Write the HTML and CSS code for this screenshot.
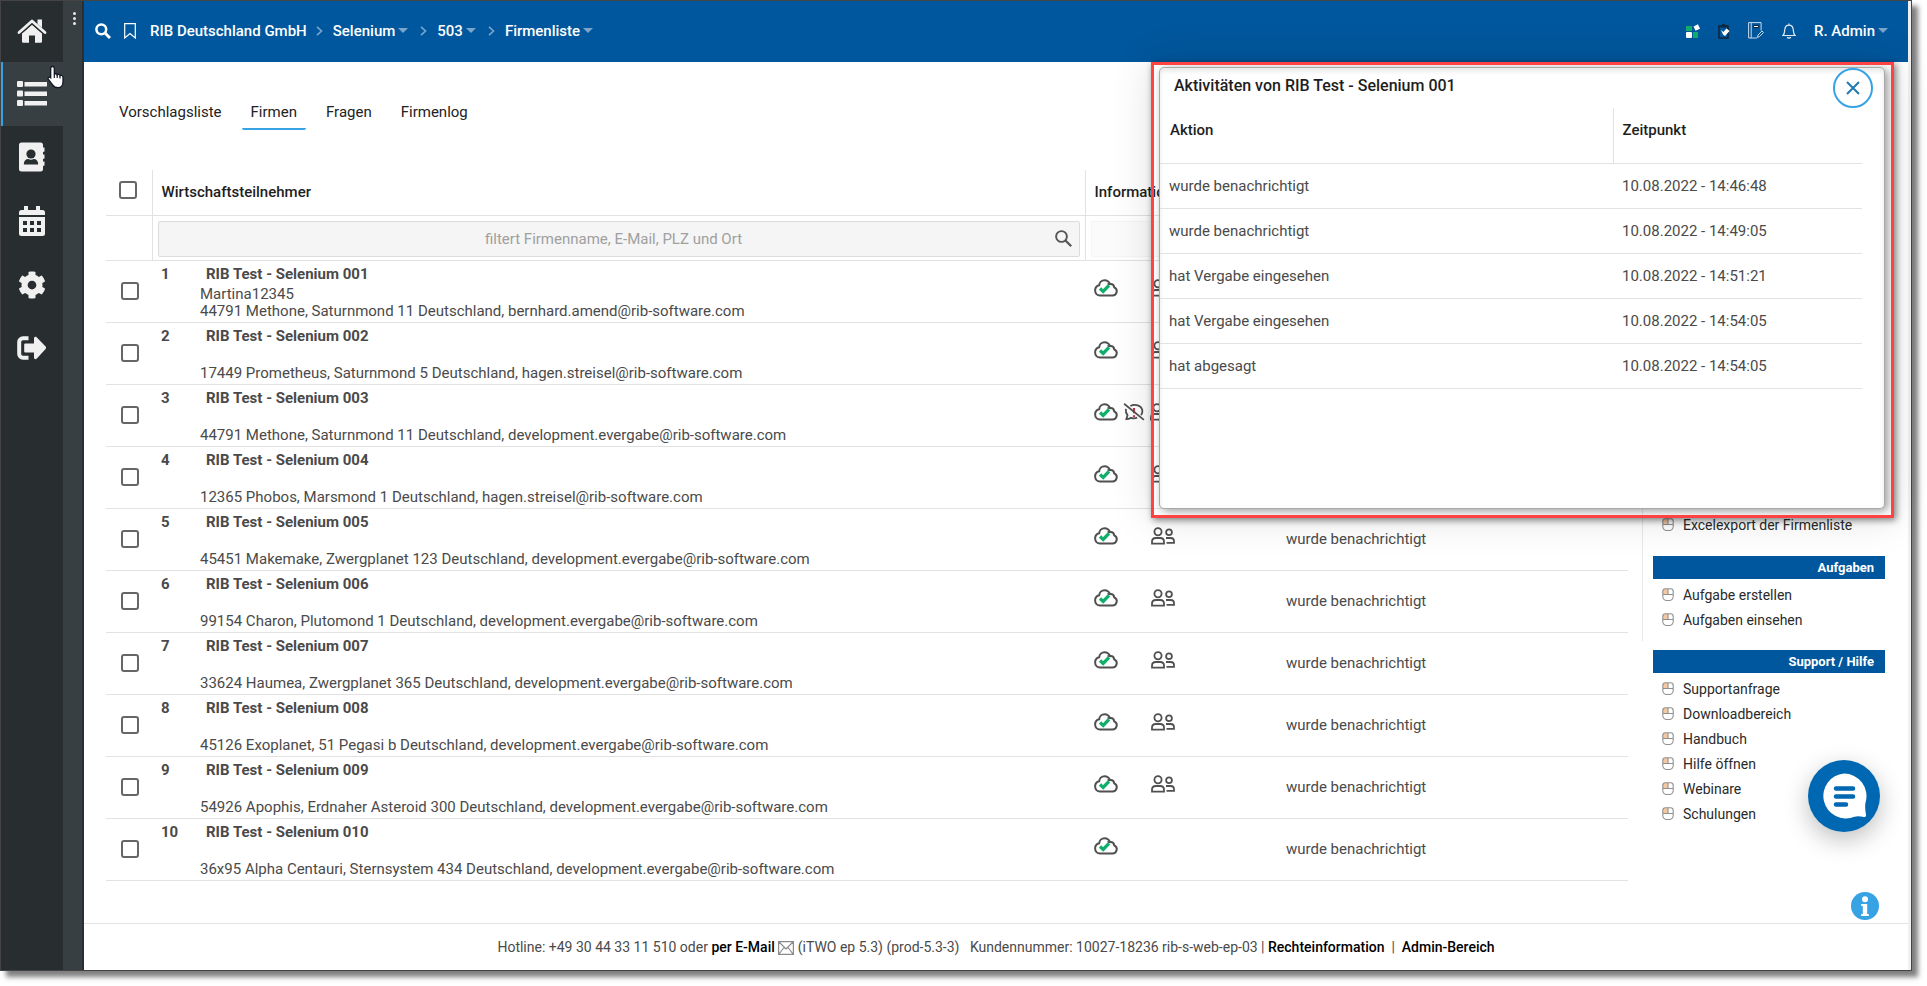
FILE: index.html
```html
<!DOCTYPE html>
<html lang="de">
<head>
<meta charset="utf-8">
<title>Firmenliste</title>
<link rel="stylesheet" href="styles.css">
</head>
<body>
<svg class="sprite" aria-hidden="true">
  <symbol id="cloud" viewBox="0 0 24 18">
    <path d="M6 16.500h12.200a4.300 4.300 0 0 0 2-8.200c-.3-2-2-3.400-4.200-3.200C15 2.600 12.800 1.200 10.600 1.200 7.600 1.200 5.400 3.400 5.200 6.200 2.800 6.800 1.100 8.800 1.100 11.300c0 3 2.200 5.200 4.900 5.200z" fill="none" stroke="#505050" stroke-width="2"/>
    <path d="M13.500 5.300c1-.5 2.400-.4 3.200.2" fill="none" stroke="#505050" stroke-width="1.700"/>
    <path d="M6 9.500l3.200 3L15 6.300" fill="none" stroke="#0fae6b" stroke-width="3.300"/>
  </symbol>
  <symbol id="people" viewBox="0 0 24 18">
    <g fill="none" stroke="#505050" stroke-width="1.800">
      <circle cx="7" cy="4.800" r="3.600"/>
      <path d="M1 16.700v-2c0-2.400 1.600-3.700 3.800-3.700h4.400c2.200 0 3.800 1.300 3.800 3.700v2z"/>
      <circle cx="18" cy="5.300" r="2.900"/>
      <path d="M15 11h4.500c2.200 0 3.500 1.200 3.500 3.200v1.600h-7.500"/>
    </g>
  </symbol>
  <symbol id="muted" viewBox="0 0 24 20">
    <path d="M3 6.500C2.500 10 3.500 12 4.800 13.500L3.500 18c2 0 3.500-.5 5-1.500 2.500.8 5 .6 7-.3M8 3.300C13 .5 20.500 2.500 21.300 8.500c.2 1.800-.3 3.500-1.500 5" fill="none" stroke="#505050" stroke-width="2"/>
    <path d="M12 5.500v6M12 13.500v2" stroke="#c0344a" stroke-width="2.400"/>
    <path d="M1 .8l22 18" stroke="#505050" stroke-width="1.900"/>
  </symbol>
  <symbol id="mouse" viewBox="0 0 12 14">
    <path d="M.8 6.500V3.500A2.700 2.700 0 0 1 3.500.8H6v5.700z" fill="#f7c9a0"/>
    <path d="M3.500.8h5a2.700 2.700 0 0 1 2.700 2.700v5a4 4 0 0 1-4 4H4.800a4 4 0 0 1-4-4v-5A2.700 2.700 0 0 1 3.500.8zM.8 6.500h10.400M6 .8v5.700" fill="none" stroke="#909090" stroke-width="1.100"/>
  </symbol>
</svg>

<div class="frame">
  <nav class="rail" aria-label="Hauptnavigation">
    <a class="rail-home" href="#" aria-label="Start">
      <svg width="30" height="26" viewBox="0 0 30 26"><path d="M2 14.500L15 3l13 11.500" fill="none" stroke="#f0f0f0" stroke-width="2.800" stroke-linejoin="round" stroke-linecap="round"/><path d="M20.500 1.500H25v8.500l-4.500-4z" fill="#f0f0f0"/><path d="M5 15.500L15 6.800l10 8.700V23.500a1.300 1.300 0 0 1-1.300 1.300H18v-7.300h-6v7.300H6.300A1.300 1.300 0 0 1 5 23.500z" fill="#f0f0f0"/><path d="M4 15.800L15 6.200l11 9.600" fill="none" stroke="#282d30" stroke-width="1"/></svg>
    </a>
    <div class="rail-items">
      <a class="rail-item active" href="#" aria-label="Listen">
        <svg width="30" height="26" viewBox="0 0 30 26" fill="#f0f0f0"><rect x="0" y="0" width="6" height="6" rx="1"/><rect x="7.500" y="1" width="22.500" height="4.500"/><rect x="0" y="9.500" width="6" height="6" rx="1"/><rect x="7.500" y="10.500" width="22.500" height="4.500"/><rect x="0" y="19" width="6" height="6" rx="1"/><rect x="7.500" y="20" width="22.500" height="4.500"/></svg>
      </a>
      <a class="rail-item" href="#" aria-label="Adressbuch">
        <svg width="28" height="30" viewBox="0 0 28 30"><path d="M3.500.5h19A2.500 2.500 0 0 1 25 3v2.500h1.500v4L25 10v2.500h1.500v4L25 17v2.500h1.500v4L25 24v3a2.500 2.500 0 0 1-2.500 2.500h-19A2.500 2.500 0 0 1 1 27V3A2.500 2.500 0 0 1 3.500.5z" fill="#f0f0f0"/><circle cx="13" cy="12" r="4.600" fill="#282d30"/><path d="M5.800 22.500c0-3.600 1.800-5.500 4.500-5.500 1.600 1 3.800 1 5.400 0 2.700 0 4.500 1.900 4.500 5.500z" fill="#282d30"/></svg>
      </a>
      <a class="rail-item" href="#" aria-label="Kalender">
        <svg width="28" height="30" viewBox="0 0 28 30"><path d="M1 9V6.500A2.500 2.500 0 0 1 3.500 4H6V0h4v4h8V0h4v4h2.500A2.500 2.500 0 0 1 27 6.500V9zM1 11h26v16.500a2.500 2.500 0 0 1-2.500 2.500h-21A2.500 2.500 0 0 1 1 27.500z" fill="#f0f0f0"/><path d="M5 15h4v4H5zM12 15h4v4h-4zM19 15h4v4h-4zM5 22h4v4H5zM12 22h4v4h-4zM19 22h4v4h-4z" fill="#282d30"/></svg>
      </a>
      <a class="rail-item" href="#" aria-label="Einstellungen">
        <svg width="28" height="30" viewBox="0 0 512 512"><path fill="#f0f0f0" d="M487.400 315.700l-42.600-24.600c4.300-23.200 4.300-47 0-70.200l42.600-24.600c4.900-2.800 7.100-8.600 5.500-14-11.100-35.600-30-67.800-54.700-94.600-3.800-4.100-10-5.100-14.800-2.300L380.800 110c-17.900-15.400-38.500-27.300-60.800-35.100V25.800c0-5.600-3.900-10.500-9.400-11.700-36.700-8.200-74.300-7.800-109.200 0-5.500 1.200-9.400 6.100-9.400 11.700V75c-22.200 7.900-42.800 19.800-60.800 35.100L88.700 85.500c-4.900-2.800-11-1.900-14.800 2.300-24.700 26.700-43.600 58.900-54.700 94.600-1.700 5.400.6 11.200 5.500 14L67.300 221c-4.300 23.200-4.300 47 0 70.200l-42.600 24.600c-4.900 2.800-7.100 8.600-5.500 14 11.100 35.600 30 67.800 54.700 94.600 3.800 4.100 10 5.100 14.800 2.300l42.600-24.600c17.900 15.400 38.500 27.300 60.800 35.100v49.200c0 5.600 3.900 10.500 9.400 11.700 36.700 8.200 74.300 7.800 109.200 0 5.500-1.200 9.400-6.100 9.400-11.700v-49.200c22.200-7.900 42.800-19.800 60.800-35.100l42.600 24.600c4.900 2.800 11 1.900 14.800-2.300 24.700-26.700 43.600-58.900 54.700-94.600 1.500-5.500-.7-11.300-5.600-14.100zM256 336c-44.100 0-80-35.900-80-80s35.900-80 80-80 80 35.900 80 80-35.900 80-80 80z"/></svg>
      </a>
      <a class="rail-item" href="#" aria-label="Abmelden">
        <svg width="30" height="24" viewBox="0 0 30 24"><path d="M11.500 2.200H6A3.800 3.800 0 0 0 2.200 6v12A3.800 3.800 0 0 0 6 21.800h5.500" fill="none" stroke="#f0f0f0" stroke-width="4"/><path d="M8.500 7.500h8.500V2.500c0-1.600 1.600-2.200 2.600-1.200l9 9.300c.6.700.6 1.700 0 2.400l-9 9.700c-1 1-2.600.4-2.600-1.200v-5H8.500c-.8 0-1.300-.5-1.300-1.300V8.800c0-.8.500-1.300 1.300-1.300z" fill="#f0f0f0"/></svg>
      </a>
    </div>
  </nav>
  <div class="rail-handle">
    <button class="dots" aria-label="Menü"><i></i><i></i><i></i></button>
  </div>

  <div class="page">
    <header class="topbar">
      <button class="icon-btn" aria-label="Suche"><svg width="16" height="16" viewBox="0 0 16 16"><circle cx="6.300" cy="6.300" r="4.900" fill="none" stroke="#fff" stroke-width="2.500"/><path d="M10 10l5 5" stroke="#fff" stroke-width="3"/></svg></button>
      <button class="icon-btn mark" aria-label="Lesezeichen"><svg width="12" height="16" viewBox="0 0 12 16"><path d="M.7.7h10.600v14.300L6 10.500.7 15z" fill="none" stroke="#fff" stroke-width="1.200"/></svg></button>
      <ol class="crumbs">
        <li><a href="#">RIB Deutschland GmbH</a></li>
        <li><svg class="chev" width="7" height="10" viewBox="0 0 7 10"><path d="M1 .8L5.500 5 1 9.200"/></svg><a href="#">Selenium</a><span class="caret"></span></li>
        <li><svg class="chev" width="7" height="10" viewBox="0 0 7 10"><path d="M1 .8L5.500 5 1 9.200"/></svg><a href="#">503</a><span class="caret"></span></li>
        <li><svg class="chev" width="7" height="10" viewBox="0 0 7 10"><path d="M1 .8L5.500 5 1 9.200"/></svg><a href="#">Firmenliste</a><span class="caret"></span></li>
      </ol>
      <div class="tools">
        <button class="icon-btn" aria-label="Module"><svg width="14" height="14" viewBox="0 0 14 14"><path fill="#0fae6b" d="M0 2h6v5H0zM7 8h5v6H7z"/><rect y="8" width="6" height="6" rx="1" fill="#fff"/><path d="M7.500 2.500L12 .2l2 4.500-4.500 2.100z" fill="#fff"/></svg></button>
        <button class="icon-btn" aria-label="Aufgaben"><svg width="12" height="16" viewBox="0 0 12 16"><path d="M1 3h9v12H1z" fill="none" stroke="#13263a" stroke-width="1.500"/><path d="M2.500 4.500V2.500h1.300C4.300 0 7 0 7.500 2.500h1.300v2z" fill="#13263a"/><path d="M3 7l2.400 2L8.500 5.500l3 2.500-4.500 5-2-1.500z" fill="#fff"/></svg></button>
        <button class="icon-btn" aria-label="Notizen"><svg width="16" height="17" viewBox="0 0 16 17" fill="none" stroke="#c9dcec"><path d="M9 16H.6V.6h12.500v8M3.200.6V16"/><path d="M5.500 3.500h5v2h-5z" stroke="#10263c" fill="#fff"/><path d="M9.500 15.500l.5-2.500 4-4 1.500 1.500-4 4z"/></svg></button>
        <button class="icon-btn" aria-label="Benachrichtigungen"><svg width="14" height="16" viewBox="0 0 14 16" fill="none" stroke="#e6eef5" stroke-width="1.200"><path d="M1 12.500c1.500-1.300 1.500-3 1.700-5.500C3 4 4.500 2.200 7 2.200S11 4 11.300 7c.2 2.500.2 4.200 1.700 5.500zM7 .5v1.700M5.300 14c.5 1.500 2.900 1.500 3.400 0"/></svg></button>
        <button class="user">R. Admin<span class="caret"></span></button>
      </div>
    </header>

    <main class="content">
      <section class="list">
        <nav class="tabs" aria-label="Ansichten">
          <a href="#">Vorschlagsliste</a>
          <a href="#" class="current">Firmen</a>
          <a href="#">Fragen</a>
          <a href="#">Firmenlog</a>
        </nav>
        <table class="firms">
          <colgroup><col class="c-check"><col class="c-name"><col class="c-info"><col class="c-status"></colgroup>
          <thead>
            <tr>
              <th class="all"><input type="checkbox" aria-label="Alle auswählen"></th>
              <th class="sep">Wirtschaftsteilnehmer</th>
              <th class="sep">Informationen</th>
              <th></th>
            </tr>
            <tr class="filters">
              <td></td>
              <td class="sep">
                <div class="filter">
                  <input type="text" placeholder="filtert Firmenname, E-Mail, PLZ und Ort" aria-label="Firmen filtern">
                  <svg width="17" height="17" viewBox="0 0 17 17" fill="none" stroke="#555"><circle cx="6.500" cy="6.500" r="5.400" stroke-width="1.900"/><path d="M10.500 10.500l5.700 5.700" stroke-width="2.200"/></svg>
                </div>
              </td>
              <td class="sep"><div class="filter blank"></div></td>
              <td></td>
            </tr>
          </thead>
          <tbody>
            <tr>
              <td class="pick"><input type="checkbox" aria-label="Selenium 001"></td>
              <td><div class="firm"><b>1</b><b class="name">RIB Test - Selenium 001</b><span class="contact">Martina12345</span><span class="address">44791 Methone, Saturnmond 11 Deutschland, bernhard.amend@rib-software.com</span></div></td>
              <td><div class="marks"><svg><use href="#cloud"/></svg><span></span><svg><use href="#people"/></svg></div></td>
              <td class="status"></td>
            </tr>
            <tr>
              <td class="pick"><input type="checkbox" aria-label="Selenium 002"></td>
              <td><div class="firm"><b>2</b><b class="name">RIB Test - Selenium 002</b><span class="address">17449 Prometheus, Saturnmond 5 Deutschland, hagen.streisel@rib-software.com</span></div></td>
              <td><div class="marks"><svg><use href="#cloud"/></svg><span></span><svg><use href="#people"/></svg></div></td>
              <td></td>
            </tr>
            <tr>
              <td class="pick"><input type="checkbox" aria-label="Selenium 003"></td>
              <td><div class="firm"><b>3</b><b class="name">RIB Test - Selenium 003</b><span class="address">44791 Methone, Saturnmond 11 Deutschland, development.evergabe@rib-software.com</span></div></td>
              <td><div class="marks"><svg><use href="#cloud"/></svg><svg><use href="#muted"/></svg><svg><use href="#people"/></svg></div></td>
              <td></td>
            </tr>
            <tr>
              <td class="pick"><input type="checkbox" aria-label="Selenium 004"></td>
              <td><div class="firm"><b>4</b><b class="name">RIB Test - Selenium 004</b><span class="address">12365 Phobos, Marsmond 1 Deutschland, hagen.streisel@rib-software.com</span></div></td>
              <td><div class="marks"><svg><use href="#cloud"/></svg><span></span><svg><use href="#people"/></svg></div></td>
              <td></td>
            </tr>
            <tr>
              <td class="pick"><input type="checkbox" aria-label="Selenium 005"></td>
              <td><div class="firm"><b>5</b><b class="name">RIB Test - Selenium 005</b><span class="address">45451 Makemake, Zwergplanet 123 Deutschland, development.evergabe@rib-software.com</span></div></td>
              <td><div class="marks"><svg><use href="#cloud"/></svg><span></span><svg><use href="#people"/></svg></div></td>
              <td class="status">wurde benachrichtigt</td>
            </tr>
            <tr>
              <td class="pick"><input type="checkbox" aria-label="Selenium 006"></td>
              <td><div class="firm"><b>6</b><b class="name">RIB Test - Selenium 006</b><span class="address">99154 Charon, Plutomond 1 Deutschland, development.evergabe@rib-software.com</span></div></td>
              <td><div class="marks"><svg><use href="#cloud"/></svg><span></span><svg><use href="#people"/></svg></div></td>
              <td class="status">wurde benachrichtigt</td>
            </tr>
            <tr>
              <td class="pick"><input type="checkbox" aria-label="Selenium 007"></td>
              <td><div class="firm"><b>7</b><b class="name">RIB Test - Selenium 007</b><span class="address">33624 Haumea, Zwergplanet 365 Deutschland, development.evergabe@rib-software.com</span></div></td>
              <td><div class="marks"><svg><use href="#cloud"/></svg><span></span><svg><use href="#people"/></svg></div></td>
              <td class="status">wurde benachrichtigt</td>
            </tr>
            <tr>
              <td class="pick"><input type="checkbox" aria-label="Selenium 008"></td>
              <td><div class="firm"><b>8</b><b class="name">RIB Test - Selenium 008</b><span class="address">45126 Exoplanet, 51 Pegasi b Deutschland, development.evergabe@rib-software.com</span></div></td>
              <td><div class="marks"><svg><use href="#cloud"/></svg><span></span><svg><use href="#people"/></svg></div></td>
              <td class="status">wurde benachrichtigt</td>
            </tr>
            <tr>
              <td class="pick"><input type="checkbox" aria-label="Selenium 009"></td>
              <td><div class="firm"><b>9</b><b class="name">RIB Test - Selenium 009</b><span class="address">54926 Apophis, Erdnaher Asteroid 300 Deutschland, development.evergabe@rib-software.com</span></div></td>
              <td><div class="marks"><svg><use href="#cloud"/></svg><span></span><svg><use href="#people"/></svg></div></td>
              <td class="status">wurde benachrichtigt</td>
            </tr>
            <tr>
              <td class="pick"><input type="checkbox" aria-label="Selenium 010"></td>
              <td><div class="firm"><b>10</b><b class="name">RIB Test - Selenium 010</b><span class="address">36x95 Alpha Centauri, Sternsystem 434 Deutschland, development.evergabe@rib-software.com</span></div></td>
              <td><div class="marks"><svg><use href="#cloud"/></svg></div></td>
              <td class="status">wurde benachrichtigt</td>
            </tr>
          </tbody>
        </table>
      </section>

      <aside class="side">
        <div class="side-main">
          <ul>
            <li><svg><use href="#mouse"/></svg><a href="#">Excelexport der Firmenliste</a></li>
          </ul>
          <h2>Aufgaben</h2>
          <ul>
            <li><svg><use href="#mouse"/></svg><a href="#">Aufgabe erstellen</a></li>
            <li><svg><use href="#mouse"/></svg><a href="#">Aufgaben einsehen</a></li>
          </ul>
        </div>
        <div class="side-help">
          <h2>Support / Hilfe</h2>
          <ul>
            <li><svg><use href="#mouse"/></svg><a href="#">Supportanfrage</a></li>
            <li><svg><use href="#mouse"/></svg><a href="#">Downloadbereich</a></li>
            <li><svg><use href="#mouse"/></svg><a href="#">Handbuch</a></li>
            <li><svg><use href="#mouse"/></svg><a href="#">Hilfe öffnen</a></li>
            <li><svg><use href="#mouse"/></svg><a href="#">Webinare</a></li>
            <li><svg><use href="#mouse"/></svg><a href="#">Schulungen</a></li>
          </ul>
        </div>
      </aside>
    </main>

    <footer class="foot">
      <p>Hotline: +49 30 44 33 11 510 oder <a href="#">per E-Mail</a>
        <svg width="16" height="14" viewBox="0 0 16 14" fill="none" stroke="#8a8a8a" stroke-width="1.200"><path d="M.6.600h14.800v12.800H.6zM1 1l7 7 7-7M1 13l5-6.500M15 13l-5-6.500"/></svg>
        (iTWO ep 5.3) (prod-5.3-3) &nbsp; Kundennummer: 10027-18236 rib-s-web-ep-03 | <a href="#">Rechteinformation</a> &nbsp;|&nbsp; <a href="#">Admin-Bereich</a></p>
    </footer>
  </div>

  <div class="callout">
    <section class="dialog" role="dialog" aria-labelledby="dialog-title">
      <button class="close" aria-label="Schließen"><svg width="14" height="14" viewBox="0 0 14 14"><path d="M1 1l12 12M13 1L1 13" stroke="#2079b5" stroke-width="2"/></svg></button>
      <h1 id="dialog-title">Aktivitäten von RIB Test - Selenium 001</h1>
      <table class="log">
        <thead><tr><th>Aktion</th><th class="time">Zeitpunkt</th></tr></thead>
        <tbody>
          <tr><td>wurde benachrichtigt</td><td>10.08.2022 - 14:46:48</td></tr>
          <tr><td>wurde benachrichtigt</td><td>10.08.2022 - 14:49:05</td></tr>
          <tr><td>hat Vergabe eingesehen</td><td>10.08.2022 - 14:51:21</td></tr>
          <tr><td>hat Vergabe eingesehen</td><td>10.08.2022 - 14:54:05</td></tr>
          <tr><td>hat abgesagt</td><td>10.08.2022 - 14:54:05</td></tr>
        </tbody>
      </table>
    </section>
  </div>

  <button class="chat" aria-label="Chat"><svg width="46" height="46" viewBox="0 0 46 46"><path d="M23 .500a22.500 22.500 0 0 1 21.600 28.800c-.8 3-.4 7 .4 12.500.2 1.500-.7 2.500-2.200 2.200-3.500-.8-6.200-1.300-9.300-.3A22.500 22.500 0 1 1 23 .5z" fill="#fff"/><path d="M15 15.500h17M15 23.500h17M15 31.500h10" stroke="#0067b3" stroke-width="4.500" stroke-linecap="round"/></svg></button>
  <button class="info" aria-label="Information"><svg width="28" height="28" viewBox="0 0 28 28"><circle cx="14" cy="14" r="14" fill="#37a3e5"/><circle cx="14" cy="7.200" r="3" fill="#fff"/><path d="M10.200 12h6v10h1.600v2h-7.600v-2h1.600v-8h-1.600z" fill="#fff"/></svg></button>
  <svg class="pointer" width="18" height="24" viewBox="0 0 18 24"><path d="M5.500 1.500c1.200 0 1.800.8 1.800 1.800v6c.3-.8 2.600-.8 2.900.5.600-.7 2.500-.5 2.800.8.700-.6 3-.2 3 1.600v4.500c0 3.500-2 6-5 6-2.800 0-4-.8-5.400-2.900L1.300 14.200c-.8-1.300.8-2.800 2.400-1.400V3.300c0-1 .6-1.800 1.800-1.800z" fill="#fff" stroke="#111722" stroke-width="1.300"/><path d="M7.300 9v4M10.200 10v3M13 11v2.500" stroke="#111722" stroke-width="1.200"/></svg>
</div>
</body>
</html>
```
FILE: styles.css
```css
* { box-sizing: border-box; }

body {
  margin: 0;
  min-height: 100vh;
  padding: 0 15px 15px 0;
  display: flex;
  background: #fff;
  font-family: Roboto, "Liberation Sans", sans-serif;
  font-size: 15px;
  line-height: 20px;
  color: #4a4a4a;
}

a { color: inherit; text-decoration: none; }
button { border: 0; padding: 0; background: none; font: inherit; color: inherit; cursor: pointer; }
ul, ol { list-style: none; margin: 0; padding: 0; }
svg { display: block; flex: none; }
.sprite { position: absolute; width: 0; height: 0; }

.frame {
  position: relative;
  flex: 1;
  display: flex;
  border: 1px solid #444;
  box-shadow: 6px 6px 5px rgba(0, 0, 0, .5);
  background: #f0f0f0;
  padding-right: 3px;
}

/* Navigation rail */
.rail { width: 62px; background: #282d30; }
.rail-home { height: 61px; padding-bottom: 2px; display: flex; align-items: center; justify-content: center; }
.rail-items { display: grid; grid-auto-rows: 1fr; height: 318px; }
.rail-item { display: flex; align-items: center; justify-content: center; }
.rail-item.active { background: #383f42; box-shadow: inset 2px 0 #37a3e5; }
.rail-handle { width: 21px; background: #383f42; border-right: 2px solid #2a2f32; }
.dots { display: flex; flex-direction: column; align-items: center; gap: 2px; width: 100%; padding-top: 11px; padding-left: 3px; }
.dots i { width: 3px; height: 3px; border-radius: 50%; background: #e8e8e8; }

.page { flex: 1; min-width: 0; display: flex; flex-direction: column; background: #fff; }

/* Top bar */
.topbar {
  height: 61px;
  padding: 0 20px 2px 11px;
  display: flex;
  align-items: center;
  background: #00579d;
  color: #fff;
  font-weight: 500;
}
.mark { margin: 0 14px 0 13px; }
.crumbs { display: flex; flex: 1; }
.crumbs li { display: flex; align-items: center; }
.chev { margin: 0 10px 0 9px; fill: none; stroke: #7ba6cb; stroke-width: 1.6px; }
.caret { margin-left: 3px; border: 5px solid transparent; border-top-color: #7ba6cb; border-bottom: 0; }
.crumbs .caret { margin-right: 3px; }
.tools { display: flex; align-items: center; gap: 18px; }
.user { display: flex; align-items: center; font-weight: 500; }

.content { flex: 1; display: flex; padding: 0 23px 0 22px; }
.list { flex: 1; min-width: 0; }

.tabs { display: flex; gap: 11px; padding: 34px 0 40px 4px; color: #222; }
.tabs a { padding: 6px 9px; border-bottom: 2px solid transparent; border-radius: 2px; }
.tabs .current { border-color: #37a3e5; }

/* Company table */
table { border-collapse: collapse; table-layout: fixed; width: 100%; }
th, td { padding: 0; text-align: left; font-weight: 400; border-bottom: 1px solid #e2e2e2; }
th { font-weight: 500; color: #1e1e1e; }
.c-check { width: 46px; }
.c-name { width: 933px; }
.c-info { width: 191px; }
.firms th { height: 45px; padding-left: 9px; }
.firms .sep { border-left: 1px solid #e2e2e2; }
.firms .all { padding: 0 0 4px 13px; }
.filters td { height: 45px; }
.filter { position: relative; margin: 3px 5px 0; height: 36px; }
.filter input {
  width: 100%;
  height: 36px;
  padding: 0 20px 0 10px;
  border: 1px solid #dcdcdc;
  border-radius: 2px;
  background: #f5f5f5;
  font: inherit;
  text-align: center;
}
.filter input::placeholder { color: #a0a0a0; }
.filter svg { position: absolute; right: 8px; top: 9px; }
.filter.blank { border: 1px solid #f5f5f5; background: #fbfbfb; }
.firms tbody tr { height: 62px; }
.firms tbody td { vertical-align: top; }
input[type="checkbox"] {
  appearance: none;
  display: block;
  width: 18px;
  height: 18px;
  margin: 0;
  border: 2px solid #666;
  border-radius: 3px;
  background: #fff;
}
.firms .pick { vertical-align: middle; padding-left: 15px; }
.firm {
  display: grid;
  grid-template-columns: 39px 1fr;
  grid-template-rows: 20px 17px 17px;
  align-content: start;
  padding: 3px 0 0 9px;
}
.firm b { font-weight: 700; }
.name { padding-left: 6px; }
.contact, .address { grid-column: 2; line-height: 17px; padding-top: 2px; }
.contact { grid-row: 2; }
.address { grid-row: 3; }
.marks { display: flex; gap: 4px; padding: 18px 0 0 9px; }
.marks svg { width: 24px; height: 18px; }
.marks span { width: 25px; }
.firms tbody .status { vertical-align: middle; padding-left: 10px; }

/* Side menu */
.side { width: 257px; padding-top: 447px; font-size: 14px; color: #2a2a2a; }
.side-main { margin-left: 14px; padding: 0 0 9px 10px; border-left: 1px solid #e8e8e8; }
.side-main ul + h2 { margin-top: 19px; }
.side-help { margin: 9px 0 0 25px; }
.side h2 {
  margin: 0;
  padding: 0 11px;
  background: #00579d;
  color: #fff;
  font-size: 13px;
  font-weight: 700;
  line-height: 23px;
  text-align: right;
}
.side ul { padding-top: 3px; }
.side li { display: flex; align-items: center; gap: 9px; height: 25px; padding-left: 9px; }
.side li svg { width: 12px; height: 14px; }

.foot { height: 47px; border-top: 1px solid #e2e2e2; display: flex; align-items: center; justify-content: center; font-size: 14px; }
.foot p { margin: 0; }
.foot a { font-weight: 500; color: #000; }
.foot svg { display: inline-block; vertical-align: -3px; }

/* Activity dialog */
.callout {
  position: absolute;
  top: 61px;
  right: 17px;
  width: 743px;
  height: 456px;
  padding: 2px 6px 6px 5px;
  border: 3px solid #ff4343;
  box-shadow: 2px 2px 7px rgba(0, 0, 0, .5), 0 0 40px rgba(0, 0, 0, .12);
}
.dialog {
  position: relative;
  height: 100%;
  border: 1px solid #aaa;
  border-radius: 5px;
  background: #fff;
  box-shadow: 3px 2px 10px rgba(0, 0, 0, .4), inset 0 3px 5px rgba(0, 0, 0, .1);
  clip-path: inset(-2px -6px -6px -5px);
}
.dialog h1 { margin: 0; padding: 8px 14px 12px; font-size: 16px; font-weight: 500; line-height: 20px; color: #1e1e1e; }
.log { width: 702px; }
.log th { height: 55px; padding: 0 0 11px 10px; }
.log td { height: 45px; padding-left: 9px; }
.log .time { width: 249px; border-left: 1px solid #e2e2e2; padding-left: 9px; }
.close {
  position: absolute;
  top: 0;
  right: 11px;
  width: 40px;
  height: 40px;
  display: flex;
  align-items: center;
  justify-content: center;
  border: 2px solid #37a3e5;
  border-radius: 50%;
  background: #fff;
}

/* Floating controls */
.chat {
  position: absolute;
  right: 31px;
  bottom: 138px;
  width: 72px;
  height: 72px;
  display: flex;
  align-items: center;
  justify-content: center;
  border-radius: 50%;
  background: #0067b3;
  box-shadow: 0 8px 24px rgba(0, 0, 0, .25);
}
.info { position: absolute; right: 32px; bottom: 50px; }
.pointer { position: absolute; left: 46px; top: 64px; }
```
